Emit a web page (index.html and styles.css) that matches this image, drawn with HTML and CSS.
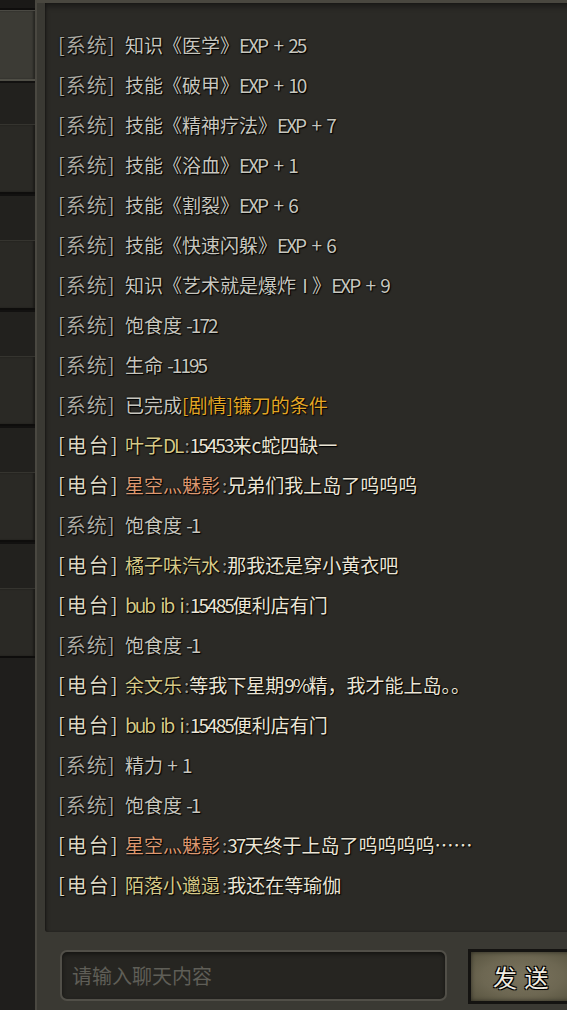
FILE: index.html
```html
<!DOCTYPE html>
<html lang="zh">
<head>
<meta charset="utf-8">
<title>聊天</title>
<link rel="stylesheet" href="styles.css">
</head>
<body>
<div class="screen">
  <aside class="tabs">
    <div class="tab-top"></div>
    <div class="tab active"></div>
    <div class="gap first"></div>
    <div class="tab"></div>
    <div class="gap"></div>
    <div class="tab"></div>
    <div class="gap"></div>
    <div class="tab"></div>
    <div class="gap"></div>
    <div class="tab"></div>
    <div class="gap"></div>
    <div class="tab"></div>
    <div class="rest"></div>
  </aside>
  <main class="panel">
    <section class="chat">
      <div class="line"><span class="tag sys">[系统]</span><span class="txt">知识《医学》<span class="lat">EXP + 25</span></span></div>
      <div class="line"><span class="tag sys">[系统]</span><span class="txt">技能《破甲》<span class="lat">EXP + 10</span></span></div>
      <div class="line"><span class="tag sys">[系统]</span><span class="txt">技能《精神疗法》<span class="lat">EXP + 7</span></span></div>
      <div class="line"><span class="tag sys">[系统]</span><span class="txt">技能《浴血》<span class="lat">EXP + 1</span></span></div>
      <div class="line"><span class="tag sys">[系统]</span><span class="txt">技能《割裂》<span class="lat">EXP + 6</span></span></div>
      <div class="line"><span class="tag sys">[系统]</span><span class="txt">技能《快速闪躲》<span class="lat">EXP + 6</span></span></div>
      <div class="line"><span class="tag sys">[系统]</span><span class="txt">知识《艺术就是爆炸<span class="lat"> I </span>》<span class="lat">EXP + 9</span></span></div>
      <div class="line"><span class="tag sys">[系统]</span><span class="txt">饱食度 <span class="lat">-172</span></span></div>
      <div class="line"><span class="tag sys">[系统]</span><span class="txt">生命 <span class="lat">-1195</span></span></div>
      <div class="line"><span class="tag sys">[系统]</span><span class="txt">已完成<span class="quest">[剧情]镰刀的条件</span></span></div>
      <div class="line"><span class="tag radio">[电台]</span><span class="name yellow">叶子<span class="lat">DL</span></span><span class="colon">:</span><span class="msg"><span class="lat">15453</span>来c蛇四缺一</span></div>
      <div class="line"><span class="tag radio">[电台]</span><span class="name orange">星空灬魅影</span><span class="colon">:</span><span class="msg">兄弟们我上岛了呜呜呜</span></div>
      <div class="line"><span class="tag sys">[系统]</span><span class="txt">饱食度 <span class="lat">-1</span></span></div>
      <div class="line"><span class="tag radio">[电台]</span><span class="name yellow">橘子味汽水</span><span class="colon">:</span><span class="msg">那我还是穿小黄衣吧</span></div>
      <div class="line"><span class="tag radio">[电台]</span><span class="name yellow lat">bub ib i</span><span class="colon">:</span><span class="msg"><span class="lat">15485</span>便利店有门</span></div>
      <div class="line"><span class="tag sys">[系统]</span><span class="txt">饱食度 <span class="lat">-1</span></span></div>
      <div class="line"><span class="tag radio">[电台]</span><span class="name yellow">余文乐</span><span class="colon">:</span><span class="msg">等我下星期<span class="lat">9%</span>精，我才能上岛。。</span></div>
      <div class="line"><span class="tag radio">[电台]</span><span class="name yellow lat">bub ib i</span><span class="colon">:</span><span class="msg"><span class="lat">15485</span>便利店有门</span></div>
      <div class="line"><span class="tag sys">[系统]</span><span class="txt">精力 <span class="lat">+ 1</span></span></div>
      <div class="line"><span class="tag sys">[系统]</span><span class="txt">饱食度 <span class="lat">-1</span></span></div>
      <div class="line"><span class="tag radio">[电台]</span><span class="name orange">星空灬魅影</span><span class="colon">:</span><span class="msg"><span class="lat">37</span>天终于上岛了呜呜呜呜……</span></div>
      <div class="line"><span class="tag radio">[电台]</span><span class="name yellow">陌落小邋遢</span><span class="colon">:</span><span class="msg">我还在等瑜伽</span></div>
    </section>
    <footer class="bar">
      <div class="input">请输入聊天内容</div>
      <div class="send">发 送</div>
    </footer>
  </main>
</div>
</body>
</html>
```
FILE: styles.css
```css
* { box-sizing: border-box; }
html, body {
  margin: 0;
  padding: 0;
  width: 567px;
  height: 1010px;
  overflow: hidden;
  background: #1d1c1a;
  font-family: "Noto Sans CJK SC", "Noto Sans", sans-serif;
}
.screen {
  display: flex;
  width: 567px;
  height: 1010px;
}
.tabs {
  width: 35px;
  flex: none;
  display: flex;
  flex-direction: column;
  background: #1f1e1c;
}
.tab-top {
  height: 10px;
  background: #1a1917;
  border-bottom: 2px solid #0f0e0d;
}
.tab {
  height: 70px;
  background: #2a2925;
  border-top: 1px solid #35342f;
  border-bottom: 2px solid #0e0d0c;
  box-shadow: inset -2px 0 2px rgba(0,0,0,0.35);
}
.tab.active {
  height: 71px;
  background: #3c3b35;
  border-top: 1px solid #4a4943;
  border-bottom: 2px solid #4f4e46;
}
.gap {
  height: 46px;
  background: #22211e;
  border-top: 2px solid #121110;
}
.gap.first { height: 43px; }
.rest {
  flex: 1;
  background: #1f1e1c;
}
.panel {
  flex: 1;
  display: flex;
  flex-direction: column;
  background: #3a3933;
  border-left: 2px solid #4a4841;
  border-top: 3px solid #49473f;
  padding-left: 8px;
}
.chat {
  height: 929px;
  background: #2b2a26;
  box-shadow: inset 0 4px 5px rgba(0,0,0,0.35), inset 1px 0 2px rgba(0,0,0,0.3);
  padding: 22px 0 0 13px;
  border-bottom-left-radius: 3px;
}
.line {
  height: 40px;
  line-height: 40px;
  font-size: 19px;
  white-space: nowrap;
  color: #c6c5bd;
  text-shadow: 0 0 2px #000, 1px 1px 1px #000;
}
.lat { letter-spacing: -2px; word-spacing: 4px; }
.tag {
  display: inline-block;
  width: 67px;
  font-size: 20px;
  letter-spacing: 1px;
}
.tag.sys { color: #a9a8a1; }
.tag.radio { color: #dcd6c2; letter-spacing: 2px; }
.txt { color: #c7c6be; }
.quest { color: #e3a625; }
.name.yellow { color: #d6c987; }
.name.orange { color: #dc9870; }
.colon { color: #9c9a90; margin: 0 1px 0 2px; letter-spacing: -1px; }
.msg { color: #ebe5d5; }
.bar {
  flex: 1;
  display: flex;
  align-items: flex-start;
  padding: 18px 0 0 15px;
  gap: 21px;
}
.input {
  width: 387px;
  height: 51px;
  border: 2px solid #514f48;
  border-radius: 7px;
  background: #262521;
  box-shadow: inset 0 2px 4px rgba(0,0,0,0.5);
  color: #5f5e57;
  font-size: 20px;
  line-height: 47px;
  padding-left: 10px;
}
.send {
  width: 110px;
  height: 55px;
  flex: none;
  margin-top: -1px;
  border: 3px solid #141311;
  background: radial-gradient(ellipse at center, #7a735d 0%, #6d6752 55%, #57533f 100%);
  box-shadow: inset 0 0 4px rgba(0,0,0,0.5);
  color: #f1ede2;
  font-size: 24px;
  line-height: 49px;
  padding-left: 22px;
  word-spacing: 2px;
  text-shadow: 0 0 2px #000, 1px 1px 0 #000, -1px -1px 0 #000, 1px -1px 0 #000, -1px 1px 0 #000;
}
```
